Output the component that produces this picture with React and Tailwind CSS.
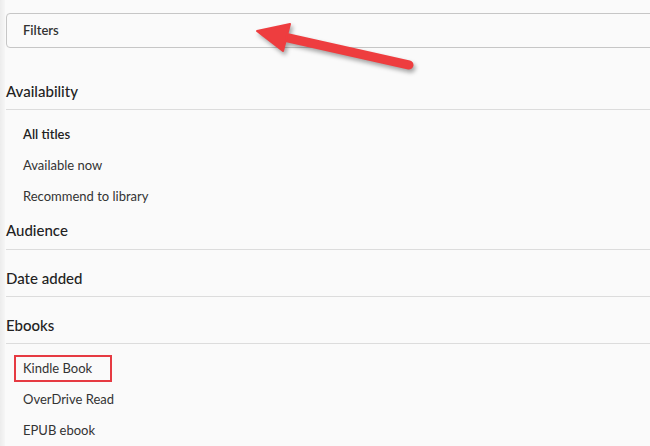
import React from "react";

const availability = [
  { label: "All titles", active: true },
  { label: "Available now" },
  { label: "Recommend to library" },
];

const ebooks = [
  { label: "Kindle Book", marked: true },
  { label: "OverDrive Read" },
  { label: "EPUB ebook" },
];

function Header({ title, pt, pb = "pb-[8px]" }) {
  return (
    <div className={`border-b border-[#dcdcdc] ${pb} ${pt}`}>
      <h3 className="text-[15px] leading-[20px] font-medium text-[#222]">{title}</h3>
    </div>
  );
}

function Item({ label, active, marked }) {
  return (
    <div className="h-[31px] flex items-center pl-[17px]">
      {marked ? (
        <span className="-ml-[9px] inline-flex items-center h-[27px] border-2 border-[#e63a42] pl-[7px] pr-[18px] text-[13px] text-[#333]">
          {label}
        </span>
      ) : (
        <span className={`text-[13px] ${active ? "font-semibold text-[#222]" : "text-[#333]"}`}>
          {label}
        </span>
      )}
    </div>
  );
}

function Arrow() {
  return (
    <svg
      className="absolute left-0 top-0 pointer-events-none"
      width="650"
      height="120"
      viewBox="0 0 650 120"
      style={{ filter: "drop-shadow(2px 3px 2px rgba(0,0,0,0.35))" }}
    >
      <line x1="284" y1="37" x2="409" y2="65" stroke="#ee3d3f" strokeWidth="9" strokeLinecap="round" />
      <polygon points="257,31 290,24 283,51" fill="#ee3d3f" stroke="#ee3d3f" strokeWidth="2" strokeLinejoin="round" />
    </svg>
  );
}

export default function App() {
  return (
    <div
      className="relative w-[650px] h-[446px] overflow-hidden bg-[#fafafa] flex"
      style={{ fontFamily: "Lato, 'Open Sans', sans-serif" }}
    >
      <div className="w-[5px] shrink-0 bg-gradient-to-r from-[#ececec] to-[#f6f6f6]" />
      <div className="pl-[1px] w-[680px] shrink-0 flex flex-col">
        <div className="mt-[13px] h-[35px] border border-[#c6c6c6] rounded-[4px] bg-[#fafafa] flex items-center pl-[16px]">
          <span className="text-[13px] font-semibold text-[#333]">Filters</span>
        </div>

        <Header title="Availability" pt="pt-[33px]" />
        <div className="pt-[9px]">
          {availability.map((a) => (
            <Item key={a.label} {...a} />
          ))}
        </div>

        <Header title="Audience" pt="pt-[8px]" pb="pb-[9px]" />
        <Header title="Date added" pt="pt-[18px]" />
        <Header title="Ebooks" pt="pt-[18px]" />
        <div className="pt-[9px]">
          {ebooks.map((e) => (
            <Item key={e.label} {...e} />
          ))}
        </div>
      </div>
      <Arrow />
    </div>
  );
}
